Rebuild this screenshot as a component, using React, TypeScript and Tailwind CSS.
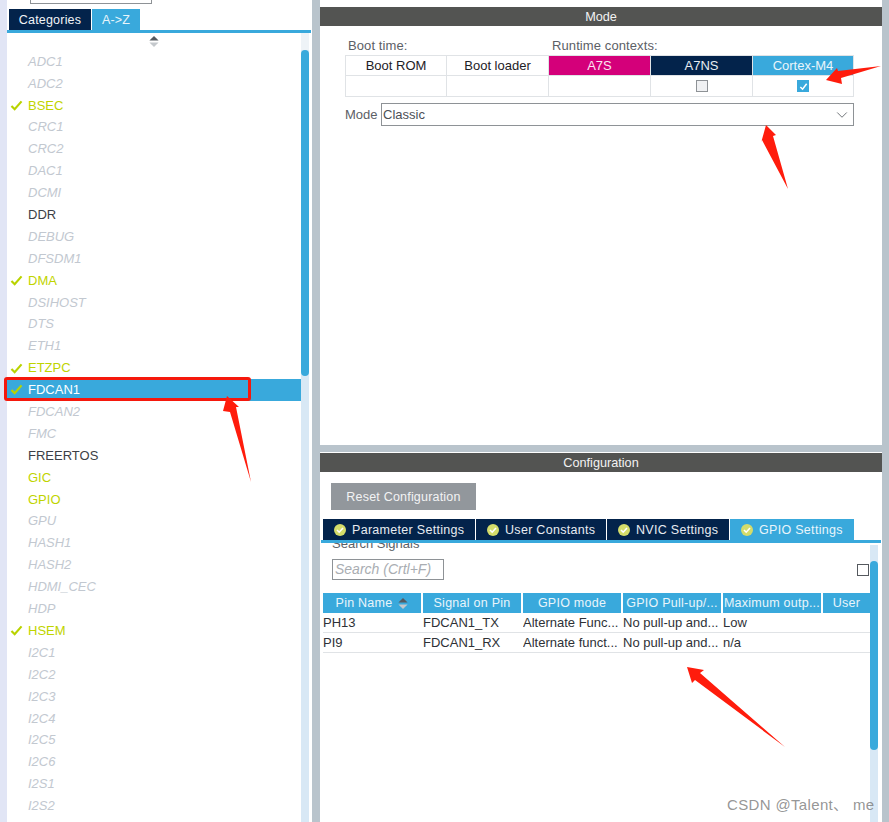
import { ChevronDown } from "lucide-react";

type Status = "off" | "on" | "lit" | "plain" | "selected";

const peripherals: [string, Status][] = [
  ["ADC1", "off"], ["ADC2", "off"], ["BSEC", "on"], ["CRC1", "off"], ["CRC2", "off"], ["DAC1", "off"],
  ["DCMI", "off"], ["DDR", "plain"], ["DEBUG", "off"], ["DFSDM1", "off"], ["DMA", "on"], ["DSIHOST", "off"],
  ["DTS", "off"], ["ETH1", "off"], ["ETZPC", "on"], ["FDCAN1", "selected"], ["FDCAN2", "off"], ["FMC", "off"],
  ["FREERTOS", "plain"], ["GIC", "lit"], ["GPIO", "lit"], ["GPU", "off"], ["HASH1", "off"], ["HASH2", "off"],
  ["HDMI_CEC", "off"], ["HDP", "off"], ["HSEM", "on"], ["I2C1", "off"], ["I2C2", "off"], ["I2C3", "off"],
  ["I2C4", "off"], ["I2C5", "off"], ["I2C6", "off"], ["I2S1", "off"], ["I2S2", "off"],
];

const tabs = [
  { label: "Parameter Settings", width: "w-[152px]", active: false },
  { label: "User Constants", width: "w-[130px]", active: false },
  { label: "NVIC Settings", width: "w-[122px]", active: false },
  { label: "GPIO Settings", width: "w-[124px]", active: true },
];

const columns = [
  { label: "Pin Name", width: "w-[98px]" },
  { label: "Signal on Pin", width: "w-[98px]" },
  { label: "GPIO mode", width: "w-[98px]" },
  { label: "GPIO Pull-up/...", width: "w-[98px]" },
  { label: "Maximum outp...", width: "w-[98px]" },
  { label: "User", width: "w-[47px]" },
];

const pins = [
  ["PH13", "FDCAN1_TX", "Alternate Func...", "No pull-up and...", "Low", ""],
  ["PI9", "FDCAN1_RX", "Alternate funct...", "No pull-up and...", "n/a", ""],
];

function Tick({ className }: { className: string }) {
  return (
    <svg viewBox="0 0 14 12" className={className} fill="none">
      <path d="M1.5 6.5 L5 10 L12.5 1.5" stroke="#b9d300" strokeWidth="2.4" />
    </svg>
  );
}

function TabCheck() {
  return (
    <svg viewBox="0 0 12 12" className="w-3 h-3 shrink-0">
      <circle cx="6" cy="6" r="6" fill="#d4dc6a" />
      <path d="M3 6 L5.2 8.2 L9 4" stroke="#fff" strokeWidth="1.6" fill="none" />
    </svg>
  );
}

function SortIcon() {
  return (
    <svg viewBox="0 0 10 12" className="w-[10px] h-[11px]">
      <path d="M5 0 L10 5 H0 Z" fill="#555a60" />
      <path d="M5 12 L10 7 H0 Z" fill="#c4c8cc" />
    </svg>
  );
}

function PeripheralRow({ name, status }: { name: string; status: Status }) {
  const color =
    status === "off"
      ? "italic text-[#c2c8d0]"
      : status === "on" || status === "lit"
        ? "text-[#bfd400]"
        : status === "selected"
          ? "bg-[#39a9dc] text-white"
          : "text-[#3c3f46]";
  return (
    <div className={`h-[21.9px] flex items-center text-[13px] ${color}`}>
      <div className="w-[21px] pl-[3px] shrink-0">
        {(status === "on" || status === "selected") && <Tick className="w-[13px] h-[11px]" />}
      </div>
      {name}
    </div>
  );
}

function SidePanel() {
  return (
    <div className="w-[312px] shrink-0 h-full flex bg-white">
      <div className="w-[7px] shrink-0 h-full bg-[#e1e5f5]" />
      <div className="w-[304px] shrink-0 h-full flex flex-col overflow-hidden">
        <div className="ml-[23px] w-[122px] h-[4px] border border-t-0 border-[#8e9296]" />
        <div className="h-[21px] mt-[5px] flex items-stretch gap-px ml-[2px] text-[12.5px] tracking-[0.2px]">
          <div className="w-[82px] pt-px bg-[#03234b] text-[#f2f4f6] flex items-center justify-center">Categories</div>
          <div className="w-[48px] pt-px bg-[#39a9dc] text-[#e9f5fb] flex items-center justify-center">A-&gt;Z</div>
        </div>
        <div className="h-[3px] bg-[#39a9dc] shrink-0" />
        <div className="flex-1 flex min-h-0">
          <div className="w-[294px] shrink-0">
            <div className="h-[14px] flex justify-center items-end">
              <SortIcon />
            </div>
            <div className="mt-[3.6px]">
              {peripherals.map(([name, status]) => (
                <PeripheralRow key={name} name={name} status={status} />
              ))}
            </div>
          </div>
          <div className="w-2 shrink-0 bg-[#d8e8f5]">
            <div className="h-[17px] bg-[#eef3f7]" />
            <div className="h-[326px] bg-[#39a9dc] rounded-full" />
          </div>
        </div>
      </div>
    </div>
  );
}

function PanelTitle({ title }: { title: string }) {
  return (
    <div className="h-[19px] shrink-0 bg-[#535452] text-[#f2f2f2] text-[12.7px] pt-[2px] flex items-center justify-center">
      {title}
    </div>
  );
}

function ModePanel() {
  const cell = "border-r border-[#e0e3e6] flex items-center justify-center";
  const grid = "grid grid-cols-[101px_102px_102px_102px_101px]";
  return (
    <div className="h-[445px] shrink-0 flex flex-col bg-white">
      <div className="h-[7px] shrink-0" />
      <PanelTitle title="Mode" />
      <div className="pl-[25px] text-[13px]">
        <div className="h-[29px] flex items-end text-[#5c6066] tracking-[0.1px]">
          <span className="ml-[3px] w-[204px]">Boot time:</span>
          <span>Runtime contexts:</span>
        </div>
        <div className="w-[509px] border border-r-0 border-[#e0e3e6] leading-none">
          <div className={`h-5 ${grid} border-b border-[#e0e3e6]`}>
            <div className={`${cell} text-[#1e2126]`}>Boot ROM</div>
            <div className={`${cell} text-[#1e2126]`}>Boot loader</div>
            <div className={`${cell} bg-[#d4007a] text-[#fbe6f1]`}>A7S</div>
            <div className={`${cell} bg-[#03234b] text-[#e8ecf1]`}>A7NS</div>
            <div className={`${cell} bg-[#39a9dc] text-[#e9f5fb]`}>Cortex-M4</div>
          </div>
          <div className={`h-[20px] ${grid}`}>
            <div className={cell} />
            <div className={cell} />
            <div className={cell} />
            <div className={cell}>
              <div className="w-3 h-3 bg-[#f0f1f3] border border-[#8e9296]" />
            </div>
            <div className={cell}>
              <div className="w-3 h-3 bg-[#39a9dc] flex items-center justify-center">
                <svg viewBox="0 0 10 10" className="w-[9px] h-[9px]">
                  <path d="M1.5 5.5 L4 8 L8.5 2" stroke="#fff" strokeWidth="1.7" fill="none" />
                </svg>
              </div>
            </div>
          </div>
        </div>
        <div className="flex items-center mt-[6px] h-[23px]">
          <span className="w-[36px] text-[#5c6066]">Mode</span>
          <div className="w-[473px] h-full border border-[#8e9296] flex items-center justify-between pl-[1px] pr-[2px] text-[#4c5056]">
            Classic
            <ChevronDown className="w-[18px] h-[18px] text-[#6e7276]" strokeWidth={1.3} />
          </div>
        </div>
      </div>
    </div>
  );
}

function ConfigPanel() {
  return (
    <div className="flex-1 min-h-0 flex flex-col bg-white overflow-hidden">
      <div className="h-px shrink-0" />
      <PanelTitle title="Configuration" />
      <div className="h-[27px] w-[145px] mt-[11px] ml-[11px] shrink-0 pt-px bg-[#92979c] text-[#f2f3f4] text-[12.5px] tracking-[0.2px] flex items-center justify-center">
        Reset Configuration
      </div>
      <div className="h-[21px] mt-[9px] ml-[3px] shrink-0 flex gap-px text-[12.5px] tracking-[0.3px]">
        {tabs.map((t) => (
          <div
            key={t.label}
            className={`${t.width} flex items-center gap-[6px] pl-[11px] pt-px ${t.active ? "bg-[#39a9dc] text-[#e9f5fb]" : "bg-[#03234b] text-[#e8ecf1]"}`}
          >
            <TabCheck />
            {t.label}
          </div>
        ))}
      </div>
      <div className="h-[3px] mx-[1px] shrink-0 bg-[#39a9dc]" />
      <div className="flex-1 flex min-h-0">
        <div className="w-[550px] shrink-0 overflow-hidden">
          <div className="h-[9px] overflow-hidden ml-[12px] text-[13px] text-[#5c6066] leading-none relative">
            <span className="absolute -top-[6px] left-0">Search Signals</span>
          </div>
          <div className="mt-[7px] flex justify-between items-center ml-[12px] pr-[1px]">
            <div className="w-[112px] h-[21px] border border-[#8e9296] flex items-center pl-[2px] text-[14px] italic text-[#a9adb2]">
              Search (Crtl+F)
            </div>
            <div className="w-3 h-3 border border-[#55595e]" />
          </div>
          <div className="mt-[13px] ml-[3px]">
            <div className="flex h-5 gap-[2px] text-[12.5px] tracking-[0.25px] text-[#e9f5fb]">
              {columns.map((c, i) => (
                <div key={c.label} className={`${c.width} shrink-0 bg-[#39a9dc] flex items-center justify-center gap-[6px] whitespace-nowrap overflow-hidden`}>
                  {c.label}
                  {i === 0 && <SortIcon />}
                </div>
              ))}
            </div>
            {pins.map((row) => (
              <div key={row[0]} className="flex h-5 border-b border-[#e0e3e6] text-[13px] text-[#2e3136]">
                {row.map((v, i) => (
                  <div key={i} className={`${columns[i].width} shrink-0 mr-[2px] pt-px whitespace-nowrap overflow-hidden flex items-center`}>
                    {v}
                  </div>
                ))}
              </div>
            ))}
          </div>
        </div>
        <div className="w-2 shrink-0 bg-[#d8e8f5] mt-[2px]">
          <div className="h-[189px] mt-[16px] bg-[#39a9dc] rounded-full" />
        </div>
      </div>
    </div>
  );
}

function Annotations() {
  return (
    <>
      <div className="absolute left-[4px] top-[377px] w-[247px] h-[24px] border-[3px] border-[#f5180c] rounded-[3px]" />
      <svg className="absolute inset-0 w-full h-full pointer-events-none" viewBox="0 0 889 822">
        <polygon points="227,396 239,407 236,407 251,482 230,412 223,411" fill="#ff1c0c" />
        <polygon points="826,80 837,68 838,71 881,66 841,78 842,84" fill="#ff1c0c" />
        <polygon points="766,125 776,135 773,136 788,189 762,140 761,143" fill="#ff1c0c" />
        <polygon points="687,667 704,670 700,673 785,747 695,680 692,683" fill="#ff1c0c" />
      </svg>
      <div className="absolute left-[727px] top-[796px] text-[15px] tracking-[0.35px] leading-[18px] text-[#7a7a7a]/80 whitespace-nowrap font-['Liberation_Sans','Noto_Sans_CJK_SC',sans-serif]">
        CSDN @Talent、 me
      </div>
    </>
  );
}

export default function App() {
  return (
    <div className="relative w-[889px] h-[822px] overflow-hidden flex bg-[#b9c4cc] font-['Liberation_Sans',sans-serif]">
      <SidePanel />
      <div className="w-[8px] shrink-0" />
      <div className="w-[562px] shrink-0 h-full flex flex-col gap-[7px]">
        <ModePanel />
        <ConfigPanel />
      </div>
      <Annotations />
    </div>
  );
}
